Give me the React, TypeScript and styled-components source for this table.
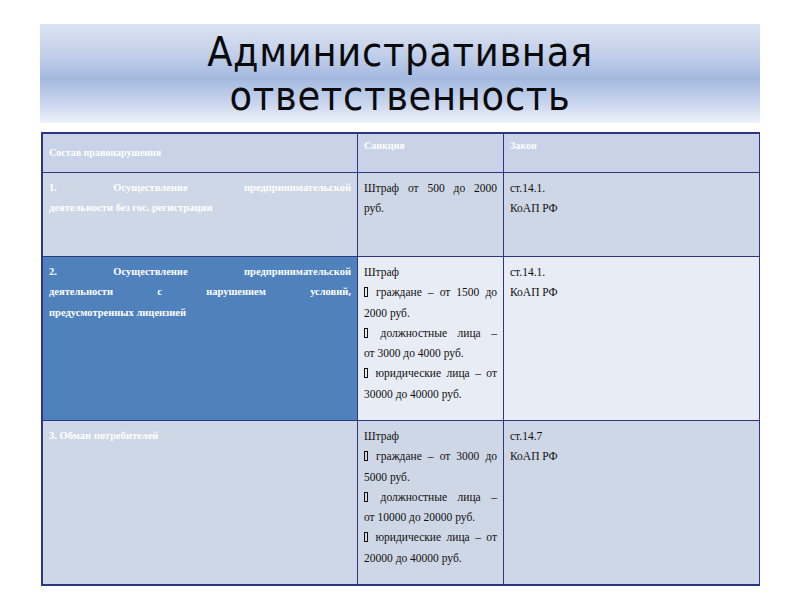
import React from "react";
import styled, { createGlobalStyle } from "styled-components";

const Global = createGlobalStyle`
  html, body { margin: 0; padding: 0; background: #ffffff; }
  body { width: 800px; height: 600px; overflow: hidden; }
`;

const Page = styled.div`
  width: 800px;
  height: 600px;
  box-sizing: border-box;
  padding: 24px 40px 0 41px;
  display: flex;
  flex-direction: column;
  gap: 9px;
  background: #ffffff;
`;

const Banner = styled.div`
  height: 99px;
  margin-left: -1px;
  display: flex;
  flex-direction: column;
  align-items: center;
  justify-content: center;
  background: linear-gradient(
    to bottom,
    #dce4f2 0%,
    #c3d0ea 30%,
    #a4b9e0 55%,
    #c9d5ee 80%,
    #eef2fa 100%
  );
`;

const Title = styled.h1`
  margin: 0;
  font-family: "DejaVu Sans Condensed", "DejaVu Sans", sans-serif;
  font-stretch: condensed;
  font-weight: normal;
  font-size: 41px;
  line-height: 44px;
  color: #0a0a0a;
  letter-spacing: 0.7px;
  text-align: center;
`;

const Table = styled.div`
  display: grid;
  grid-template-columns: 315px 146px 1fr;
  grid-template-rows: 39px 84px 164px 163px;
  border: 2px solid #2f3585;
  border-right-width: 1.5px;
  box-sizing: border-box;
  width: 719px;
`;

type CellProps = { $bg: string; $last?: boolean; $lastRow?: boolean };

const Cell = styled.div<CellProps>`
  background: ${(p) => p.$bg};
  border-right: ${(p) => (p.$last ? "none" : "1.5px solid #2f3585")};
  border-bottom: ${(p) => (p.$lastRow ? "none" : "1.5px solid #2f3585")};
  padding: 5px 6px 0 6px;
  box-sizing: border-box;
  overflow: hidden;
`;

const HeadText = styled.div<{ $pt?: number }>`
  font-family: "Liberation Serif", serif;
  font-weight: bold;
  font-size: 10px;
  color: #ffffff;
  padding-top: ${(p) => p.$pt ?? 0}px;
  line-height: 14px;
`;

const LeftText = styled.div`
  font-family: "Liberation Serif", serif;
  font-weight: bold;
  font-size: 10.5px;
  line-height: 20.3px;
  color: #ffffff;
  text-align: justify;
`;

const Para = styled.p`
  margin: 0;
  font-family: "Liberation Serif", serif;
  font-size: 11.5px;
  line-height: 20.3px;
  color: #111111;
  text-align: justify;
`;

const Box = styled.span`
  display: inline-block;
  width: 4px;
  height: 10px;
  border: 1.2px solid #111;
  box-sizing: border-box;
  margin-right: 2px;
  vertical-align: -1px;
`;

const Spread = styled.span`
  display: block;
  text-align: justify;
  text-align-last: justify;
`;

const hdr = "#c8d3e8";
const rowA = "#ced7e6";
const rowB = "#e8ecf4";
const dark = "#4f81bd";

export default function App() {
  return (
    <>
      <Global />
      <Page>
        <Banner>
          <Title>
            Административная
            <br />
            ответственность
          </Title>
        </Banner>
        <Table>
          <Cell $bg={hdr}>
            <HeadText $pt={7}>Состав правонарушения</HeadText>
          </Cell>
          <Cell $bg={hdr}>
            <HeadText>Санкция</HeadText>
          </Cell>
          <Cell $bg={hdr} $last>
            <HeadText>Закон</HeadText>
          </Cell>

          <Cell $bg={rowA}>
            <LeftText>
              <Spread>1. Осуществление предпринимательской</Spread>
              деятельности без гос. регистрации
            </LeftText>
          </Cell>
          <Cell $bg={rowA}>
            <Para>
              <Spread>Штраф от 500 до 2000</Spread>
              руб.
            </Para>
          </Cell>
          <Cell $bg={rowA} $last>
            <Para>ст.14.1.</Para>
            <Para>КоАП РФ</Para>
          </Cell>

          <Cell $bg={dark}>
            <LeftText>
              <Spread>2. Осуществление предпринимательской</Spread>
              <Spread>деятельности с нарушением условий,</Spread>
              предусмотренных лицензией
            </LeftText>
          </Cell>
          <Cell $bg={rowB}>
            <Para>Штраф</Para>
            <Para>
              <Spread>
                <Box /> граждане – от 1500 до
              </Spread>
              2000 руб.
            </Para>
            <Para>
              <Spread>
                <Box /> должностные лица –
              </Spread>
              от 3000 до 4000 руб.
            </Para>
            <Para>
              <Spread>
                <Box /> юридические лица – от
              </Spread>
              30000 до 40000 руб.
            </Para>
          </Cell>
          <Cell $bg={rowB} $last>
            <Para>ст.14.1.</Para>
            <Para>КоАП РФ</Para>
          </Cell>

          <Cell $bg={rowA} $lastRow>
            <LeftText>3. Обман потребителей</LeftText>
          </Cell>
          <Cell $bg={rowA} $lastRow>
            <Para>Штраф</Para>
            <Para>
              <Spread>
                <Box /> граждане – от 3000 до
              </Spread>
              5000 руб.
            </Para>
            <Para>
              <Spread>
                <Box /> должностные лица –
              </Spread>
              от 10000 до 20000 руб.
            </Para>
            <Para>
              <Spread>
                <Box /> юридические лица – от
              </Spread>
              20000 до 40000 руб.
            </Para>
          </Cell>
          <Cell $bg={rowA} $last $lastRow>
            <Para>ст.14.7</Para>
            <Para>КоАП РФ</Para>
          </Cell>
        </Table>
      </Page>
    </>
  );
}
